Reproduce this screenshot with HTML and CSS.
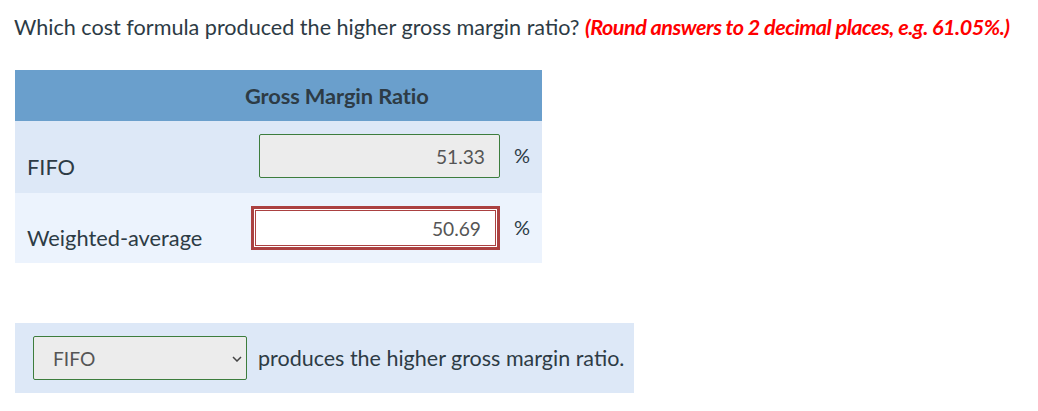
FILE: index.html
```html
<!DOCTYPE html>
<html>
<head>
<meta charset="utf-8">
<link rel="stylesheet" href="styles.css">
</head>
<body>
<div class="page">
  <p class="question">Which cost formula produced the higher gross margin ratio? <span class="hint">(Round answers to 2 decimal places, e.g. 61.05%.)</span></p>

  <div class="table">
    <div class="thead">Gross Margin Ratio</div>
    <div class="trow odd">
      <div class="label">FIFO</div>
      <div class="field correct">51.33</div>
      <div class="unit">%</div>
    </div>
    <div class="trow even">
      <div class="label">Weighted-average</div>
      <div class="field wrong">50.69</div>
      <div class="unit">%</div>
    </div>
  </div>

  <div class="answer">
    <div class="select">
      <span>FIFO</span>
      <svg class="chev" width="10" height="6" viewBox="0 0 10 6"><path d="M1 1l4 4 4-4" fill="none" stroke="#444" stroke-width="1.5"/></svg>
    </div>
    <span class="answer-text">produces the higher gross margin ratio.</span>
  </div>
</div>
</body>
</html>
```

FILE: styles.css
```css
* { box-sizing: border-box; }
body {
  margin: 0;
  background: #fff;
  font-family: Lato, "Open Sans", sans-serif;
  color: #2d3b45;
}
.page {
  padding: 13px 15px 0 15px;
}
.question {
  margin: 0;
  font-size: 21.6px;
  line-height: 28px;
  margin-left: -1px;
  white-space: nowrap;
}
.hint {
  color: #ff0000;
  font-weight: bold;
  font-style: italic;
  letter-spacing: -0.5px;
}
.table {
  margin-top: 29px;
  width: 527px;
}
.thead {
  height: 51px;
  background: #6a9fcc;
  font-weight: bold;
  font-size: 21.8px;
  display: flex;
  align-items: center;
  padding-left: 230px;
  letter-spacing: -0.1px;
}
.trow {
  display: grid;
  grid-template-columns: 1fr 249px 42px;
  align-items: start;
}
.trow.odd { background: #dde8f7; height: 72px; }
.trow.even { background: #ecf3fd; height: 70px; }
.label {
  align-self: end;
  font-size: 21.8px;
  line-height: 24px;
  padding: 0 0 14px 12px;
}
.trow.even .label { padding-bottom: 13px; }
.field {
  margin-top: 13px;
  height: 44px;
  display: flex;
  align-items: center;
  justify-content: flex-end;
  font-size: 19.2px;
  color: #555;
}
.field.correct {
  margin-left: 8px;
  background: #ececec;
  border: 1px solid #3d7d3d;
  border-radius: 2px;
  padding-right: 14px;
}
.field.wrong {
  background: #fff;
  border: 3px solid #ab4141;
  box-shadow: inset 0 0 0 1px #fff, inset 0 0 0 2px #ab4141;
  padding-right: 16px;
}
.unit {
  margin-top: 22px;
  padding-left: 14px;
  font-size: 20px;
  line-height: 24px;
}
.answer {
  margin-top: 60px;
  width: 619px;
  height: 70px;
  background: #dde8f7;
  display: flex;
  align-items: center;
  padding-left: 18px;
}
.select {
  width: 214px;
  height: 44px;
  background: #ececec;
  border: 1px solid #3d7d3d;
  border-radius: 2px;
  display: flex;
  align-items: center;
  justify-content: space-between;
  padding: 0 4px 0 19px;
  font-size: 19.2px;
  color: #555;
}
.chev { margin-top: 1px; }
.answer-text {
  margin-left: 11px;
  font-size: 21.5px;
}
```
